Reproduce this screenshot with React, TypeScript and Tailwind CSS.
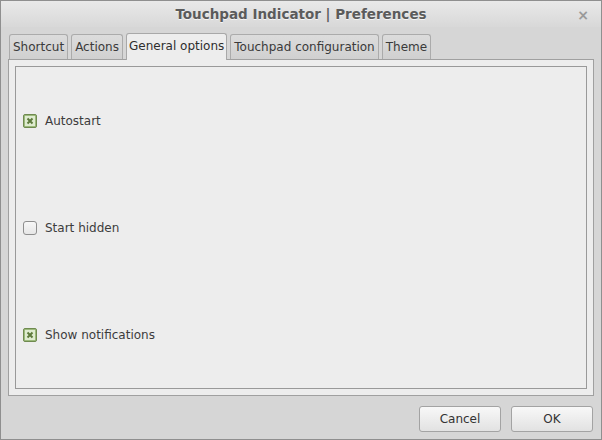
import React, { useState } from 'react'

const tabs = ['Shortcut', 'Actions', 'General options', 'Touchpad configuration', 'Theme']

function Check({ checked, label, onToggle }: { checked: boolean; label: string; onToggle: () => void }) {
  return (
    <button onClick={onToggle} className="flex items-center gap-[8px] text-[12px] text-[#3c3c3c]">
      {checked ? (
        <span className="flex h-[14px] w-[14px] items-center justify-center rounded-[2px] border border-[#6f8a4f] bg-[#9cba7c]">
          <svg width="10" height="10" viewBox="0 0 10 10">
            <rect x="0" y="0" width="10" height="10" fill="#dfecd0" />
            <path d="M2.5 2.5 L7.5 7.5 M7.5 2.5 L2.5 7.5" stroke="#5d7a3c" strokeWidth="2" />
          </svg>
        </span>
      ) : (
        <span className="h-[14px] w-[14px] rounded-[3px] border border-[#8e8e8e] bg-gradient-to-b from-[#f7f7f7] to-[#e6e6e6]" />
      )}
      <span>{label}</span>
    </button>
  )
}

export default function App() {
  const [active, setActive] = useState(2)
  const [opts, setOpts] = useState({ autostart: true, hidden: false, notify: true })

  return (
    <div
      className="flex h-[440px] w-[602px] flex-col border border-[#8f8f8f] bg-[#d6d6d6]"
      style={{ fontFamily: '"DejaVu Sans", sans-serif' }}
    >
      {/* Title bar */}
      <div className="relative flex h-[26px] items-center justify-center bg-gradient-to-b from-[#e9e9e9] to-[#d8d8d8]">
        <span className="text-[13.5px] font-bold text-[#5b5b5b] [text-shadow:0_1px_0_#f4f4f4]">
          Touchpad Indicator | Preferences
        </span>
        <span className="absolute right-[12px] top-[4px] text-[14px] font-bold text-[#9a9a9a]">×</span>
      </div>

      <div className="flex flex-1 flex-col px-[7px] pt-[6px]">
        {/* Tabs */}
        <div className="flex items-end gap-[3px] pl-[1px]">
          {tabs.map((t, i) =>
            i === active ? (
              <button
                key={t}
                onClick={() => setActive(i)}
                className="relative -mb-px h-[27px] rounded-t-[3px] border border-b-0 border-[#a8a8a8] bg-[#ededed] px-[2px] pb-[3px] text-[12px] text-[#2e2e2e]"
              >
                {t}
              </button>
            ) : (
              <button
                key={t}
                onClick={() => setActive(i)}
                className="h-[25px] rounded-t-[3px] border border-b-0 border-[#ababab] bg-gradient-to-b from-[#dcdcdc] to-[#d0d0d0] px-[3px] text-[12px] text-[#3a3a3a]"
              >
                {t}
              </button>
            )
          )}
        </div>

        {/* Notebook page */}
        <div className="h-[337px] border border-[#a0a0a0] bg-[#ededed] p-[6px]">
          <div className="flex h-full flex-col justify-around border border-[#999999] bg-[#ededed] px-[7px]">
            <Check checked={opts.autostart} label="Autostart" onToggle={() => setOpts({ ...opts, autostart: !opts.autostart })} />
            <Check checked={opts.hidden} label="Start hidden" onToggle={() => setOpts({ ...opts, hidden: !opts.hidden })} />
            <Check checked={opts.notify} label="Show notifications" onToggle={() => setOpts({ ...opts, notify: !opts.notify })} />
          </div>
        </div>

        {/* Buttons */}
        <div className="flex justify-end gap-[10px] pr-[1px] pt-[10px]">
          <button className="h-[26px] w-[82px] rounded-[3px] border border-[#a3a3a3] bg-gradient-to-b from-[#f8f8f8] to-[#e2e2e2] text-[12px] text-[#333]">
            Cancel
          </button>
          <button className="h-[26px] w-[82px] rounded-[3px] border border-[#a3a3a3] bg-gradient-to-b from-[#f8f8f8] to-[#e2e2e2] text-[12px] text-[#333]">
            OK
          </button>
        </div>
      </div>
    </div>
  )
}
